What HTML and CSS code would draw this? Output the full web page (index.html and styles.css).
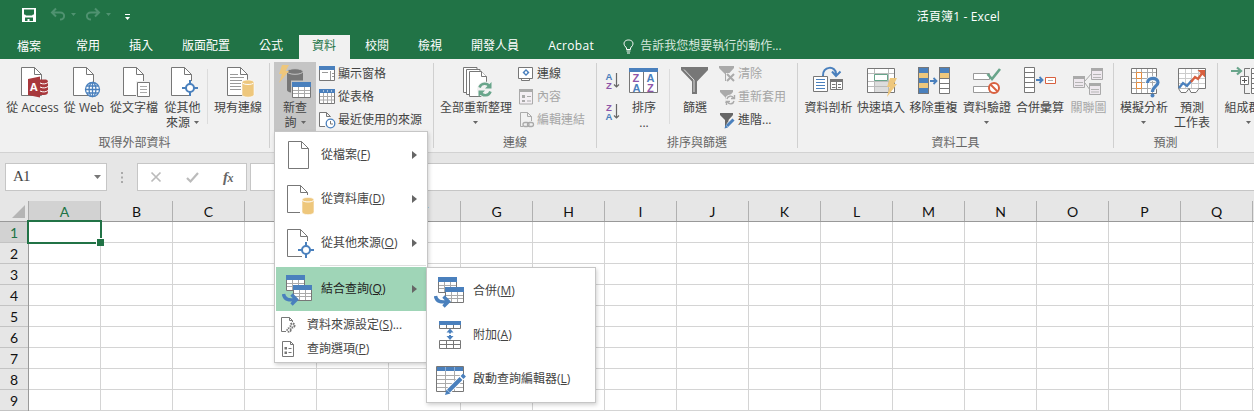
FILE: index.html
```html
<!DOCTYPE html>
<html lang="zh-Hant">
<head>
<meta charset="utf-8">
<title>活頁簿1 - Excel</title>
<link rel="stylesheet" href="styles.css">
</head>
<body>
<svg class="defs" width="0" height="0">
  <defs>
    <symbol id="page" viewBox="0 0 21 29"><path d="M.5.5H13.5L20.5 7.5V28.5H.5Z" fill="#fff" stroke="#777"/><path d="M13.5 .5V7.5H20.5" fill="none" stroke="#777"/></symbol>
    <symbol id="cyl" viewBox="0 0 14 19"><path d="M1 3.5V15.5C1 19 13 19 13 15.5V3.5C13 .2 1 .2 1 3.5Z" fill="#eec77c" stroke="#fff" stroke-width=".6"/><path d="M1.5 3.8C2 6 12 6 12.500 3.800" fill="none" stroke="#fff"/></symbol>
    <symbol id="target" viewBox="0 0 16 16"><path d="M8 0V16M0 8H16" stroke="#4a80bd" stroke-width="2"/><circle cx="8" cy="8" r="4" fill="#fff" stroke="#4a80bd" stroke-width="2"/></symbol>
    <symbol id="table" viewBox="0 0 19 16"><path d="M.5 .5H18.500V15.500H.5Z" fill="#fff" stroke="#777"/><path d="M6.500 5V15M12.500 5V15M1 8.500H18M1 11.500H18" stroke="#aaa"/><path d="M0 0H19V5H0Z" fill="#4a80bd"/></symbol>
    <symbol id="merge" viewBox="0 0 30 31"><use href="#table" x="4" y="0" width="19" height="16"/><use href="#table" x="11" y="10" width="19" height="16"/><path d="M1.500 19C2.500 25 7 25.500 14 24.500M9.500 19.500L14.500 24.500L9.500 29.500" fill="none" stroke="#4a80bd" stroke-width="3.400"/></symbol>
    <symbol id="down" viewBox="0 0 5 3"><path d="M0 0H5L2.500 3Z" fill="currentColor"/></symbol>
  </defs>
</svg>

<header class="titlebar">
  <svg class="quick" width="120" height="20" viewBox="20 6 120 20">
    <path d="M22 8H36V22H22Z" fill="#fff"/><path d="M24 9.500H34V14.500H33L32 15.500H26L25 14.500H24ZM25 17.500H33V21H29.500V19H27.500V21H25Z" fill="#217346"/>
    <g fill="none" stroke="#4f9270" stroke-width="2"><path d="M56 8.500L52 12.500L56 16.500M52 12.500H60C66 12.500 65 19.500 60 19.500"/><path d="M95 8.500L99 12.500L95 16.500M99 12.500H91C85 12.500 86 19.500 91 19.500"/></g>
    <path d="M71 13H76L73.500 16ZM106 13H111L108.500 16Z" fill="#4f9270"/>
    <path d="M125 14H130V15H125ZM125 17H130L127.500 20Z" fill="#fff"/>
  </svg>
  <span class="doc-title">活頁簿1 - Excel</span>
</header>

<nav class="tabs">
  <span class="tab file">檔案</span><span class="tab">常用</span><span class="tab">插入</span><span class="tab">版面配置</span><span class="tab">公式</span><span class="tab active">資料</span><span class="tab">校閱</span><span class="tab">檢視</span><span class="tab">開發人員</span><span class="tab">Acrobat</span>
  <span class="tell"><svg width="11" height="15" viewBox="0 0 11 15"><path d="M3.500 10.500V9L1.500 6.500C0 3 2.500 1 5.500 1S11 3 9.500 6.500L7.500 9V10.500Z" fill="none" stroke="#fff"/><path d="M3.500 12H7.500M4 14H7" stroke="#fff"/></svg><span>告訴我您想要執行的動作...</span></span>
</nav>

<section class="ribbon">
  <div class="group g-ext">
    <div class="tools">
      <button class="big w53"><svg width="53" height="36" viewBox="6 64 53 36"><use href="#page" x="21" y="67" width="21" height="29"/><path d="M38 79.500H46Q48 79.500 48 82V92Q48 95 44 95H38" fill="#a8383c"/><path d="M40 83C43 84.500 46 84 48 82.500M40 87C43 88.500 46 88 48 86.500M40 91C43 92.500 46 92 48 90.500" stroke="#fff" fill="none"/><path d="M28 79L40 76.500V97.500L28 95Z" fill="#a8383c"/><text x="30" y="91" class="glyph-a">A</text></svg><span>從 Access</span></button>
      <button class="big w50"><svg width="50" height="36" viewBox="59 64 50 36"><use href="#page" x="73" y="67" width="21" height="29"/><g fill="#fff" stroke="#4a80bd" stroke-width="1.300"><circle cx="92.500" cy="89.500" r="7"/><ellipse cx="92.500" cy="89.500" rx="3.400" ry="7"/><path d="M92.500 82.500V96.500M85.500 89.500H99.500M87 86H98M87 93H98"/></g></svg><span>從 Web</span></button>
      <button class="big w50"><svg width="50" height="36" viewBox="109 64 50 36"><use href="#page" x="123" y="67" width="21" height="29"/><path d="M136 81H145V97H136Z" fill="#f1f1f1"/><path d="M137.500 82.500H149.500V96.500H137.500Z" fill="#fff" stroke="#777"/><path d="M140 86.500H147M140 89.500H147M140 92.500H147" stroke="#aaa"/></svg><span>從文字檔</span></button>
      <button class="big w47"><svg width="47" height="36" viewBox="159 64 47 36"><use href="#page" x="171" y="67" width="21" height="29"/><path d="M189 81H193V97H189Z" fill="#f1f1f1"/><use href="#target" x="182" y="80" width="16" height="16"/></svg><span>從其他<br>來源 <svg class="dd" width="5" height="3"><use href="#down"/></svg></span></button>
      <i class="thin"></i>
      <button class="big w60"><svg width="60" height="36" viewBox="208 64 60 36"><use href="#page" x="227" y="67" width="21" height="29"/><path d="M230 74.500H238M230 77.500H244M230 80.500H242M230 83.500H241M230 86.500H241M230 89.500H241" stroke="#999"/><use href="#cyl" x="241" y="79" width="14" height="19"/></svg><span>現有連線</span></button>
    </div>
    <div class="label">取得外部資料</div>
  </div>
  <i class="rule"></i>
  <div class="group g-query">
    <div class="tools">
      <button class="big w42 pressed"><svg width="42" height="36" viewBox="274 64 42 36"><path d="M287 72V90C287 94 303 94 303 90V72Z" fill="#777"/><ellipse cx="295" cy="71.500" rx="8" ry="2.800" fill="#777" stroke="#c5c5c5"/><path d="M282 65H289L285.500 71H289L279 83L282 74H279Z" fill="#eec77c"/><path d="M291 80.500H303V94H291Z" fill="#c5c5c5"/><use href="#table" x="292" y="82" width="19" height="16"/></svg><span>新查<br>詢 <svg class="dd" width="5" height="3"><use href="#down"/></svg></span></button>
      <div class="stack">
        <button class="small"><svg width="20" height="18" viewBox="318 64 20 18"><path d="M319.500 65.500H334.500V79.500H319.500Z" fill="#fff" stroke="#777"/><path d="M319 65H335V69H319Z" fill="#4a80bd"/><path d="M322 71.500H328M330.500 70V79M332 72.500H334M332 75.500H334" stroke="#999"/></svg>顯示窗格</button>
        <button class="small"><svg width="20" height="18" viewBox="318 87 20 18"><path d="M319.500 88.500H334.500V102.500H319.500Z" fill="#fff" stroke="#777"/><path d="M323.500 92V102M327.500 92V102M331.500 92V102M320 95.500H334M320 99H334" stroke="#aaa"/><path d="M319 88H335V92H319Z" fill="#4a80bd"/><path d="M323.500 89V91M327.500 89V91M331.500 89V91" stroke="#a9c3e0"/></svg>從表格</button>
        <button class="small"><svg width="20" height="18" viewBox="318 110 20 18"><path d="M325 125.500H319.500V111.500H326.500L330.500 115.500M326.500 111.500V115.500H330.500" fill="#fff" stroke="#777"/><circle cx="330.500" cy="122.500" r="4.300" fill="#fff" stroke="#4a80bd" stroke-width="1.300"/><path d="M330.500 120V123H333" fill="none" stroke="#777"/></svg>最近使用的來源</button>
      </div>
    </div>
  </div>
  <i class="rule"></i>
  <div class="group g-conn">
    <div class="tools">
      <button class="big w76"><svg width="76" height="36" viewBox="438 64 76 36"><g fill="#fff" stroke="#777"><path d="M463.500 67.500H477V92.500H463.500Z"/><path d="M466.500 69.500H480V94.500H466.500Z"/><path d="M469.500 71.500H481.500L486.500 76.500V96.500H469.500Z"/><path d="M481.500 71.500V76.500H486.500"/></g><circle cx="485" cy="89.500" r="8" fill="#f1f1f1"/><g fill="none" stroke="#69a58b" stroke-width="2.600"><path d="M479.500 87.500A5.500 5.500 0 0 1 489.500 86.500"/><path d="M490.500 91.500A5.500 5.500 0 0 1 480.500 92.500"/></g><path d="M491.500 82V88.500H485ZM478.500 97V90.500H485Z" fill="#69a58b"/></svg><span>全部重新整理<br><svg class="dd mid" width="5" height="3"><use href="#down"/></svg></span></button>
      <div class="stack">
        <button class="small"><svg width="20" height="18" viewBox="517 64 20 18"><path d="M521.500 76.500H529.500V79.500H521.500Z" fill="#fff" stroke="#777"/><path d="M518.500 66.500H532.500V77.500H518.500Z" fill="#fff" stroke="#777"/><path d="M526 68L529.500 71.500L526 75L522.500 71.500Z" fill="#4a80bd"/><circle cx="526" cy="71.500" r="1.200" fill="#fff"/></svg>連線</button>
        <button class="small off"><svg width="20" height="18" viewBox="517 87 20 18"><path d="M519.500 88.500H532.500V103H519.500Z" fill="#f4eff4" stroke="#aaa"/><path d="M519 88H533V91H519Z" fill="#aaa"/><path d="M522 94H525V97H522ZM522 99H525V101H522Z" fill="#aaa"/><path d="M527 95.500H531M527 100H531" stroke="#aaa"/></svg>內容</button>
        <button class="small off"><svg width="20" height="18" viewBox="517 110 20 18"><path d="M523 125.500H520.500V111.500H527.500L531.500 115.500V120M527.500 111.500V115.500H531.500" fill="none" stroke="#aaa"/><rect x="523" y="121.500" width="6" height="4" rx="2" fill="none" stroke="#aaa" stroke-width="1.300"/><rect x="527.500" y="121.500" width="6" height="4" rx="2" fill="none" stroke="#aaa" stroke-width="1.300"/></svg>編輯連結</button>
      </div>
    </div>
    <div class="label">連線</div>
  </div>
  <i class="rule"></i>
  <div class="group g-sort">
    <div class="tools">
      <div class="az">
        <svg width="24" height="31" viewBox="603 66 24 31"><text x="605.500" y="80" class="la">A</text><text x="606" y="88.500" class="lz">Z</text><path d="M616.500 73V87M614 84.500L616.500 87L619 84.500" fill="none" stroke="#666" stroke-width="1.200"/></svg>
        <svg width="24" height="31" viewBox="603 97 24 31"><text x="606" y="111" class="lz">Z</text><text x="605.500" y="119.500" class="la">A</text><path d="M616.500 104V118M614 115.500L616.500 118L619 115.500" fill="none" stroke="#666" stroke-width="1.200"/></svg>
      </div>
      <button class="big w34"><svg width="34" height="36" viewBox="627 64 34 36"><path d="M629.500 68.500H657.500V92.500H629.500ZM643.500 72V92" fill="#fff" stroke="#777"/><path d="M629 68H658V72H629Z" fill="#4a80bd"/><g class="mid-letters"><text x="632.500" y="81.500" class="lz">Z</text><text x="632.500" y="91.500" class="la">A</text><text x="646.500" y="81.500" class="la">A</text><text x="647" y="91.500" class="lz">Z</text></g></svg><span>排序<br>...</span></button>
      <i class="thin"></i>
      <button class="big w50"><svg width="50" height="36" viewBox="670 64 50 36"><path d="M681 67H708V70L697 81.500V94H692V81.500L681 70Z" fill="#777"/><path d="M684 69.500L694 80V92" stroke="#ddd" fill="none"/></svg><span>篩選</span></button>
      <div class="stack">
        <button class="small off"><svg width="20" height="18" viewBox="718 64 20 18"><path d="M719 65H734V67L728.500 73V80H725V73L719 67Z" fill="#aaa"/><path d="M726 72H735V81H726Z" fill="#f1f1f1"/><path d="M727 73L734 80M734 73L727 80" stroke="#aaa" stroke-width="2"/></svg>清除</button>
        <button class="small off"><svg width="20" height="18" viewBox="718 87 20 18"><path d="M720 89H733V91L728.500 96V102H725V96L720 91Z" fill="#aaa"/><circle cx="730.500" cy="99" r="5.500" fill="#f1f1f1"/><path d="M727 98A3.500 3.500 0 0 1 733.500 97M734 100A3.500 3.500 0 0 1 727.500 101M734.500 94V97.500H731M726.500 104V100.500H730" fill="none" stroke="#aaa" stroke-width="1.400"/></svg>重新套用</button>
        <button class="small"><svg width="20" height="18" viewBox="718 110 20 18"><path d="M720 112H733V114L728.500 119V126H725V119L720 114Z" fill="#666"/><path d="M725 128L727 122L733 116L737 119L731 125Z" fill="#f1f1f1"/><path d="M727 125L733.500 118.500" stroke="#4a80bd" stroke-width="3"/><path d="M724.500 127.500L725.500 124L728 126.500Z" fill="#4a80bd"/></svg>進階...</button>
      </div>
    </div>
    <div class="label">排序與篩選</div>
  </div>
  <i class="rule"></i>
  <div class="group g-data">
    <div class="tools">
      <button class="big w53"><svg width="53" height="36" viewBox="802 64 53 36"><path d="M823 76C822 66 836 65 836 74M832 71.500L836 76L840.500 71.500" fill="none" stroke="#4a80bd" stroke-width="2"/><path d="M813.500 76.500H827.500V91.500H813.500Z" fill="#fff" stroke="#777"/><path d="M816 79.500H825M816 82.500H825M816 85.500H825M816 88.500H825" stroke="#4a80bd"/><path d="M830.500 79.500H842.500V89.500H830.500Z" fill="#fff" stroke="#777"/><path d="M830 79H843V82H830Z" fill="#777"/><path d="M832 84.500H835.500M838 84.500H841M832 87.500H835.500M838 87.500H841M836.500 82V89" stroke="#777"/></svg><span>資料剖析</span></button>
      <button class="big w52"><svg width="52" height="36" viewBox="855 64 52 36"><path d="M867.500 68.500H894.500V92.500H867.500Z" fill="#fff" stroke="#777"/><path d="M874 82H888V92H874Z" fill="#ddd"/><path d="M874.500 69V92M888.500 69V92M868 73.500H894M868 81.500H894M868 86.500H894" stroke="#bbb"/><path d="M874.500 74.500H887.500V80.500H874.500Z" fill="#fff" stroke="#69a58b"/><path d="M890 78H897L894 84H897L887 97L889.500 87H887Z" fill="#eec77c"/></svg><span>快速填入</span></button>
      <button class="big w53"><svg width="53" height="36" viewBox="907 64 53 36"><path d="M918 67H929V94H918ZM939 67H950V73H939Z" fill="#4a80bd"/><path d="M919 73H928V78H919ZM919 83H928V88H919ZM940 73H949V78H940Z" fill="#eec77c"/><path d="M940 78H949V93H940Z" fill="#fff"/><path d="M918.500 67.500H928.500V93.500H918.500ZM939.500 67.500H949.500V93.500H939.500ZM940 78.500H949M940 83.500H949M940 88.500H949" fill="none" stroke="#777"/><path d="M930 81H936M933.500 78L936.500 81L933.500 84" fill="none" stroke="#4a80bd" stroke-width="1.800"/></svg><span>移除重複</span></button>
      <button class="big w54"><svg width="54" height="36" viewBox="960 64 54 36"><path d="M973.500 73.500H989.500V79.500H973.500ZM973.500 86.500H989.500V92.500H973.500Z" fill="#fff" stroke="#999"/><path d="M987.500 74L992 79L1000 69" fill="none" stroke="#69a58b" stroke-width="2.600"/><circle cx="994" cy="88" r="5" fill="#fff" stroke="#d8603f" stroke-width="2"/><path d="M990.500 84.500L997.500 91.500" stroke="#d8603f" stroke-width="2"/></svg><span>資料驗證<br><svg class="dd mid" width="5" height="3"><use href="#down"/></svg></span></button>
      <button class="big w52"><svg width="52" height="36" viewBox="1014 64 52 36"><path d="M1024.500 67.500H1034.500V92.500H1024.500ZM1025 72.500H1034M1025 77.500H1034M1025 82.500H1034M1025 87.500H1034" fill="#fff" stroke="#777"/><path d="M1036 80H1042M1039.500 77L1042.500 80L1039.500 83" fill="none" stroke="#4a80bd" stroke-width="1.800"/><path d="M1045.500 77.500H1055.500V83.500H1045.500Z" fill="#fff" stroke="#d8603f"/><path d="M1048 80.500H1053" stroke="#aaa"/></svg><span>合併彙算</span></button>
      <button class="big w45 off"><svg width="45" height="36" viewBox="1066 64 45 36"><path d="M1085 81L1092 73M1085 83L1090 90" stroke="#aaa"/><g fill="#eee8ee" stroke="#aaa"><path d="M1073.500 76.500H1084.500V87.500H1073.500ZM1091.500 68.500H1102.500V79.500H1091.500ZM1089.500 83.500H1100.500V94.500H1089.500Z"/></g><path d="M1073 76H1085V79H1073ZM1091 68H1103V71H1091ZM1089 83H1101V86H1089Z" fill="#aaa"/><path d="M1075 82.500H1083M1075 85.500H1083M1093 74.500H1101M1093 77.500H1101M1091 89.500H1099M1091 92H1099" stroke="#b5b5b5"/></svg><span>關聯圖</span></button>
    </div>
    <div class="label">資料工具</div>
  </div>
  <i class="rule"></i>
  <div class="group g-fore">
    <div class="tools">
      <button class="big w52"><svg width="52" height="36" viewBox="1118 64 52 36"><path d="M1131.500 68.500H1156.500V93.500H1131.500Z" fill="#fff" stroke="#777"/><path d="M1136.500 69V93M1141.500 69V93M1147.500 69V93M1152.500 69V93M1132 72.500H1156M1132 78.500H1156M1132 82.500H1156M1132 88.500H1156" stroke="#aaa"/><path d="M1136.500 72.500H1141.500V78.500H1136.500ZM1136.500 82.500H1141.500V88.500H1136.500Z" fill="#fff" stroke="#e58b3c"/><path d="M1147.500 83C1147.500 77 1158 77 1158 82.500C1158 86 1152.500 86.500 1152.500 92" fill="none" stroke="#f1f1f1" stroke-width="5"/><path d="M1147.500 83C1147.500 77 1158 77 1158 82.500C1158 86 1152.500 86.500 1152.500 92" fill="none" stroke="#4a80bd" stroke-width="3.200"/><circle cx="1152.500" cy="95.500" r="2" fill="#4a80bd"/></svg><span>模擬分析<br><svg class="dd mid" width="5" height="3"><use href="#down"/></svg></span></button>
      <button class="big w44"><svg width="44" height="36" viewBox="1170 64 44 36"><path d="M1178.500 68.500H1205.500V88.500H1178.500Z" fill="#fff" stroke="#777"/><path d="M1185.500 69V88M1191.500 69V88M1198.500 69V88M1179 73.500H1205M1179 78.500H1205M1179 83.500H1205" stroke="#ccc"/><path d="M1178.500 88.500L1181 92.500H1186L1189 88.500L1191 92.500H1196L1199 88.500" fill="#fff" stroke="#777"/><path d="M1179 88L1183 83L1187 86L1192 80" fill="none" stroke="#4a80bd" stroke-width="2.300"/><path d="M1191 82L1195 77L1198 79L1203 72" fill="none" stroke="#d8603f" stroke-width="2.300"/><path d="M1197.500 70H1205V77.500Z" fill="#d8603f"/></svg><span>預測<br>工作表</span></button>
    </div>
    <div class="label">預測</div>
  </div>
  <i class="rule"></i>
  <div class="group g-outline">
    <div class="tools">
      <button class="big w53"><svg width="53" height="36" viewBox="1223 64 53 36"><path d="M1232 71H1241M1238 67.500L1242 71L1238 74.500" fill="none" stroke="#69a58b" stroke-width="2.200"/><path d="M1251 68.500H1245.500V76M1245.500 84V93.500H1251" fill="none" stroke="#777"/><path d="M1241.500 76.500H1249.500V84.500H1241.500ZM1252.500 68.500H1264V93.500H1252.500ZM1253 73.500H1264M1253 78.500H1264M1253 83.500H1264M1253 88.500H1264" fill="#fff" stroke="#777"/><path d="M1243 80.500H1248M1245.500 78V83" stroke="#555"/></svg><span>組成群組<br><svg class="dd mid" width="5" height="3"><use href="#down"/></svg></span></button>
    </div>
  </div>
</section>

<section class="formula-row">
  <div class="name-box"><span>A1</span><svg width="7" height="4" viewBox="0 0 7 4"><path d="M0 0H7L3.500 4Z" fill="#777"/></svg></div>
  <svg class="grip" width="2" height="11" viewBox="0 0 2 11"><path d="M0 0H2V2H0ZM0 4.500H2V6.500H0ZM0 9H2V11H0Z" fill="#aaa"/></svg>
  <div class="fx-box">
    <svg width="10" height="10" viewBox="0 0 10 10"><path d="M.5 .5L9.500 9.500M9.500 .5L.5 9.500" stroke="#bbb" stroke-width="1.700"/></svg>
    <svg width="13" height="11" viewBox="0 0 13 11"><path d="M1 6L4.500 9.500L12 1" fill="none" stroke="#bbb" stroke-width="2.200"/></svg>
    <em>f<small>x</small></em>
  </div>
  <div class="formula"></div>
</section>

<main class="sheet">
  <div class="cols">
    <span class="corner"><svg width="13" height="13" viewBox="0 0 13 13"><path d="M13 0V13H0Z" fill="#b5b5b5"/></svg></span>
    <span class="col on">A</span><span class="col">B</span><span class="col">C</span><span class="col">D</span><span class="col">E</span><span class="col">F</span><span class="col">G</span><span class="col">H</span><span class="col">I</span><span class="col">J</span><span class="col">K</span><span class="col">L</span><span class="col">M</span><span class="col">N</span><span class="col">O</span><span class="col">P</span><span class="col">Q</span><span class="col"></span>
  </div>
  <div class="body">
    <div class="rows"><span class="on">1</span><span>2</span><span>3</span><span>4</span><span>5</span><span>6</span><span>7</span><span>8</span><span>9</span></div>
    <div class="cells"><i class="selection"></i></div>
  </div>
</main>

<div class="menu main-menu">
  <div class="item"><svg width="44" height="44" viewBox="277 133 44 44"><path d="M288.500 141.500H301.500L308.500 148.500V168.500H288.500ZM301.500 141.500V148.500H308.500" fill="#fff" stroke="#777"/></svg><span>從檔案(<u>F</u>)</span><b></b></div>
  <div class="item"><svg width="44" height="44" viewBox="277 177 44 44"><path d="M300 212.500H287.500V185.500H300.500L307.500 192.500V195M300.500 185.500V192.500H307.500" fill="#fff" stroke="#777"/><use href="#cyl" x="301" y="196.500" width="14" height="19"/></svg><span>從資料庫(<u>D</u>)</span><b></b></div>
  <div class="item"><svg width="44" height="44" viewBox="277 221 44 44"><path d="M302 256.500H287.500V229.500H300.500L307.500 236.500V241M300.500 229.500V236.500H307.500" fill="#fff" stroke="#777"/><use href="#target" x="298" y="242" width="16" height="16"/></svg><span>從其他來源(<u>O</u>)</span><b></b></div>
  <hr>
  <div class="item hot"><svg width="44" height="44" viewBox="277 267 44 44"><use href="#merge" x="282" y="275" width="30" height="31"/></svg><span>結合查詢(<u>Q</u>)</span><b></b></div>
  <div class="item low"><svg width="30" height="24" viewBox="277 313 30 24"><path d="M286 331.500H281.500V317.500H289.500L292.500 320.500V322M289.500 317.500V320.500H292.500" fill="#fff" stroke="#777"/><circle cx="292.500" cy="325.500" r="2" fill="none" stroke="#777" stroke-width="2" stroke-dasharray="1.500 .7"/><circle cx="289" cy="330" r="1.800" fill="none" stroke="#777" stroke-width="1.700" stroke-dasharray="1.500 .7"/></svg><span>資料來源設定(<u>S</u>)...</span></div>
  <div class="item low"><svg width="30" height="24" viewBox="277 337 30 24"><path d="M282.500 341.500H290.500L293.500 344.500V356.500H282.500ZM290.500 341.500V344.500H293.500" fill="#fff" stroke="#777"/><path d="M284.500 347H287V349.500H284.500ZM284.500 351.500H287V354H284.500Z" fill="#777"/><path d="M288.500 348.500H291.500M288.500 352.500H291.500" stroke="#777"/></svg><span>查詢選項(<u>P</u>)</span></div>
</div>

<div class="menu sub-menu">
  <div class="item"><svg width="44" height="44" viewBox="429 269 44 44"><use href="#merge" x="434" y="277" width="30" height="31"/></svg><span>合併(<u>M</u>)</span></div>
  <div class="item"><svg width="44" height="44" viewBox="429 313 44 44"><path d="M439.500 321.500H460.500V328.500H439.500ZM446.500 325V328M453.500 325V328M439.500 340.500H460.500V348.500H439.500ZM446.500 340V348M453.500 340V348M440 344.500H460" fill="#fff" stroke="#777"/><path d="M439 321H461V325H439Z" fill="#4a80bd"/><path d="M450 328.500L453.500 332.500H446.500ZM450 340L446.500 336H453.500ZM449 332H451V333.500H449ZM449 335H451V337H449Z" fill="#4a80bd"/></svg><span>附加(<u>A</u>)</span></div>
  <div class="item"><svg width="44" height="44" viewBox="429 357 44 44"><path d="M436.500 366.500H463.500V391.500H436.500Z" fill="#fff" stroke="#777"/><path d="M445.500 371V391M454.500 371V391M437 375.500H463M437 379.500H463M437 383.500H463M437 387.500H463" stroke="#aaa"/><path d="M437 367H463V371H437Z" fill="#4a80bd"/><path d="M445.500 367V371M454.500 367V371" stroke="#8db0d8"/><path d="M448 391.500L463.500 376" stroke="#fff" stroke-width="6"/><path d="M448.500 391L461 378.500M462 377.500L464.500 375" stroke="#4a80bd" stroke-width="4"/><path d="M445 395L446.500 389.500L450.500 393.500Z" fill="#4a80bd"/></svg><span>啟動查詢編輯器(<u>L</u>)</span></div>
</div>
</body>
</html>
```
FILE: styles.css
```css
* { box-sizing: border-box; }
body {
  position: relative;
  width: 1254px;
  height: 411px;
  margin: 0;
  overflow: hidden;
  background: #fff;
  color: #444;
  font: 12px/14px "Open Sans", "Noto Sans CJK TC", sans-serif;
}
svg { display: block; flex: none; overflow: visible; }
.defs { position: absolute; }
button {
  margin: 0;
  padding: 0;
  border: 0;
  background: none;
  color: inherit;
  font: inherit;
  letter-spacing: inherit;
  white-space: nowrap;
}
i { flex: none; }

.titlebar {
  display: flex;
  justify-content: space-between;
  height: 35px;
  padding: 6px 254px 0 20px;
  background: #217346;
  color: #fff;
}
.doc-title { line-height: 21px; letter-spacing: 0.15px; }

.tabs {
  display: flex;
  gap: 2px;
  height: 24px;
  background: #217346;
  color: #fff;
  line-height: 21px;
}
.tab { padding: 0 14px 0 13px; white-space: nowrap; }
.file { width: 61px; padding: 1px 0 0 17px; }
.active { background: #f1f1f1; color: #217346; }
.tab:nth-child(10) { width: 74px; letter-spacing: 0.3px; }
.tell { display: flex; gap: 6px; padding: 0 0 0 12px; color: #d7e8de; }
.tell svg { margin-top: 4px; }

.ribbon {
  display: flex;
  height: 94px;
  overflow: hidden;
  border-bottom: 1px solid #d2d2d2;
  background: #f1f1f1;
}
.group { flex: none; padding-top: 3px; }
.rule { width: 1px; height: 85px; margin-top: 4px; background: #d0d0d0; }
.thin { width: 1px; height: 55px; margin: 7px 0 0; background: #dcdcdc; }
.tools { display: flex; height: 73px; }
.label { line-height: 15px; text-align: center; color: #666; }
.g-ext { width: 269px; }
.g-ext .tools { padding-left: 6px; }
.g-ext .thin { margin-left: 1px; }
.g-query { width: 163px; }
.g-query .tools { padding-left: 4px; }
.g-conn { width: 162px; }
.g-conn .tools { padding-left: 4px; }
.g-sort { width: 200px; }
.g-sort .tools { padding-left: 6px; }
.g-sort .thin { margin-left: 8px; }
.g-data { width: 315px; }
.g-data .tools { padding-left: 4px; }
.g-fore { width: 103px; }
.g-fore .tools { padding-left: 4px; }
.g-outline { width: 60px; }
.g-outline .tools { padding-left: 4px; }

.big {
  display: flex;
  flex: none;
  flex-direction: column;
  align-items: center;
  height: 69px;
  padding-top: 2px;
  line-height: 15px;
  text-align: center;
}
.w34 { width: 34px; }
.w42 { width: 42px; }
.w44 { width: 44px; }
.w45 { width: 45px; }
.w47 { width: 47px; }
.w50 { width: 50px; }
.w52 { width: 52px; }
.w53 { width: 53px; }
.w54 { width: 54px; }
.w60 { width: 60px; }
.w76 { width: 76px; }
.g-sort .w50 { margin-right: -2px; }
.pressed { background: #c5c5c5; }
.off { color: #a6a6a6; }
.dd { display: inline-block; margin: 0 0 3px 1px; color: #666; }
.dd.mid { margin-left: 0; }
.stack { display: flex; flex-direction: column; padding-left: 2px; }
.g-conn .stack { padding-left: 3px; }
.g-sort .stack { padding-left: 0; }
.small { display: flex; align-items: center; height: 23px; }
.az { padding-top: 4px; }
.la, .lz { font: bold 9.5px "Liberation Sans", sans-serif; }
.la { fill: #4a80bd; }
.lz { fill: #8e55a8; }
.mid-letters text { font-size: 11px; }
.glyph-a { font: bold 11px "Open Sans", sans-serif; fill: #fff; }

.formula-row {
  display: flex;
  height: 48px;
  padding: 10px 0 10px 5px;
  background: #e6e6e6;
}
.name-box, .fx-box, .formula { border: 1px solid #c6c6c6; background: #fff; }
.name-box {
  display: flex;
  align-items: center;
  justify-content: space-between;
  width: 102px;
  padding: 0 5px 1px 7px;
  font: 15px "Liberation Serif", serif;
  letter-spacing: -0.8px;
}
.grip { margin: 9px 14px 0; }
.fx-box {
  display: flex;
  align-items: center;
  gap: 25px;
  width: 110px;
  padding-left: 13px;
}
.fx-box em { margin-left: -1px; font: italic bold 15px "Liberation Serif", serif; color: #666; letter-spacing: -0.5px; }
.fx-box small { font-size: 12px; }
.formula { flex: 1; margin-left: 3px; border-right: 0; }

.sheet { font: 14px/22px Lato, sans-serif; color: #111; }
.cols {
  display: flex;
  height: 21px;
  border-bottom: 1px solid #999;
  background: #e6e6e6;
}
.corner {
  display: flex;
  flex: none;
  justify-content: flex-end;
  align-items: center;
  width: 29px;
  padding-right: 3px;
  border-right: 1px solid #aaa;
}
.col { flex: none; width: 72px; border-right: 1px solid #b0b0b0; text-align: center; line-height: 22px; }
.cols .on, .rows .on { background: #d2d2d2; color: #217346; }
.body { display: flex; height: 189px; }
.rows { width: 29px; border-right: 1px solid #999; background: #e6e6e6; }
.rows span { display: block; height: 21px; border-bottom: 1px solid #c3c3c3; text-align: center; }
.cells {
  position: relative;
  flex: 1;
  background:
    repeating-linear-gradient(90deg, transparent 0 71px, #d4d4d4 71px 72px),
    repeating-linear-gradient(180deg, transparent 0 20px, #d4d4d4 20px 21px);
}
.selection { position: absolute; left: -2px; top: -2px; width: 75px; height: 24px; border: 2px solid #217346; }
.selection::after {
  content: "";
  position: absolute;
  right: -4px;
  bottom: -4px;
  width: 7px;
  height: 7px;
  border: solid #fff;
  border-width: 1px 0 0 1px;
  background: #217346;
}

.menu {
  position: absolute;
  border: 1px solid #c6c6c6;
  background: #fff;
  box-shadow: 1px 2px 4px rgba(0, 0, 0, .18);
}
.main-menu { left: 274px; top: 131px; width: 154px; height: 232px; padding: 1px; }
.sub-menu { left: 426px; top: 267px; width: 170px; height: 136px; padding: 1px; }
.item { display: flex; align-items: center; height: 44px; padding-left: 1px; white-space: nowrap; }
.item b { margin: 0 9px 0 auto; border: solid transparent; border-width: 4px 0 4px 5px; border-left-color: #666; }
.hot { margin-bottom: 2px; background: #9fd5b7; color: #222; }
.low { height: 24px; }
.menu hr { height: 1px; margin: 0 0 1px 44px; border: 0; background: #dedede; }
```
